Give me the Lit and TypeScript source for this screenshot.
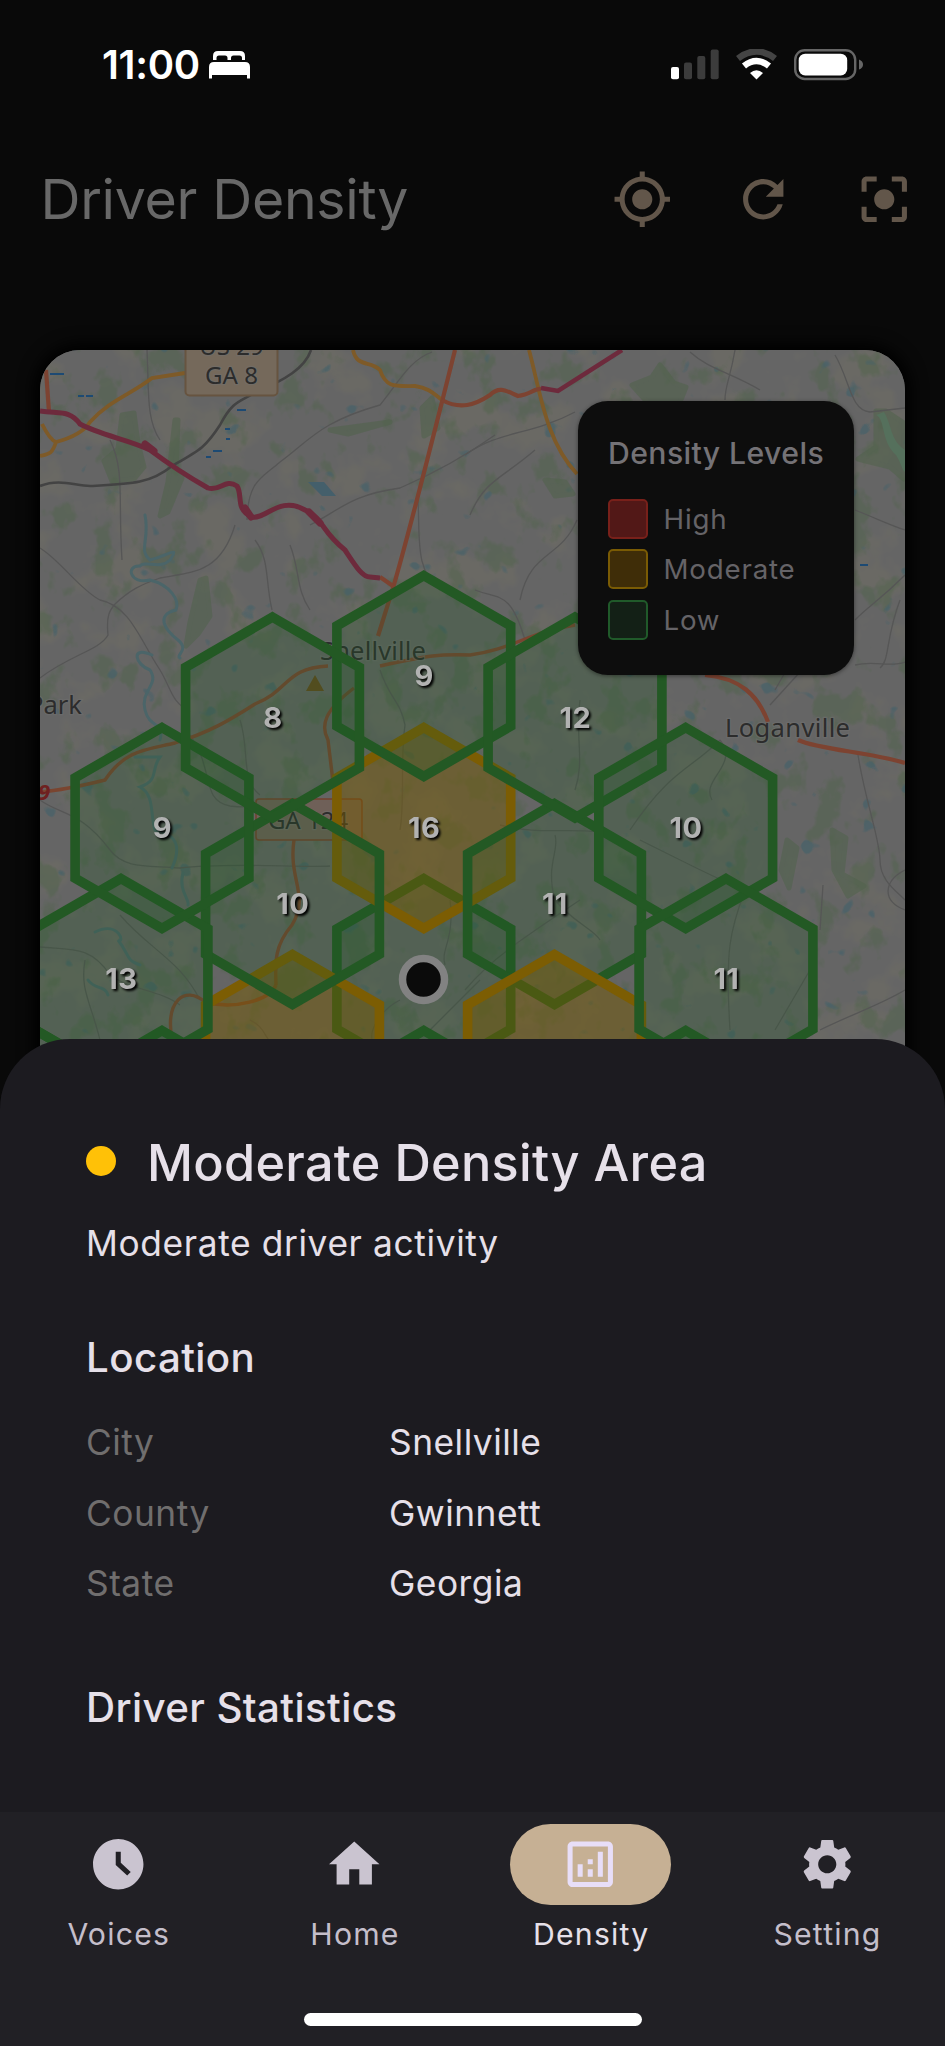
import { LitElement, html, svg, css } from "lit";
import { customElement } from "lit/decorators.js";

type Level = "low" | "mod";
interface Cell { x: number; y: number; level: Level; n?: number }

// Cells in paint order: centre, inner ring, outer ring.
const CELLS: Cell[] = [
  { x: 423.8, y: 979, level: "low" },
  { x: 423.8, y: 828, level: "mod", n: 16 },
  { x: 554.5, y: 904, level: "low", n: 11 },
  { x: 554.5, y: 1055, level: "mod" },
  { x: 423.8, y: 1131, level: "low" },
  { x: 292.5, y: 1055, level: "mod" },
  { x: 292.5, y: 904, level: "low", n: 10 },
  { x: 423.8, y: 676, level: "low", n: 9 },
  { x: 575, y: 717.5, level: "low", n: 12 },
  { x: 685.7, y: 828, level: "low", n: 10 },
  { x: 726, y: 979, level: "low", n: 11 },
  { x: 685.7, y: 1131, level: "low" },
  { x: 162, y: 1131, level: "low" },
  { x: 31, y: 1128, level: "low" },
  { x: 121, y: 979, level: "low", n: 13 },
  { x: 162, y: 828, level: "low", n: 9 },
  { x: 272.5, y: 717.5, level: "low", n: 8 },
];

const hexPoints = (cx: number, cy: number, r = 100.4) =>
  [0, 1, 2, 3, 4, 5]
    .map((i) => {
      const a = (Math.PI / 3) * i - Math.PI / 2;
      return `${(cx + r * Math.cos(a)).toFixed(1)},${(cy + r * Math.sin(a)).toFixed(1)}`;
    })
    .join(" ");

const MINOR = [
  "M147 350 C149 390 146 420 160 440", "M40 548 C60 560 80 590 100 600 C130 606 140 640 160 670 C172 690 170 700 190 712",
  "M115 604 C130 590 140 585 160 578 C190 572 220 575 235 525", "M40 678 C70 655 100 650 108 635 C106 615 110 610 115 604",
  "M247 520 C248 480 262 478 280 462 C310 440 320 422 380 405 C400 380 410 360 432 352",
  "M310 525 C340 510 350 495 400 488 C430 475 460 460 495 435", "M418 500 C420 540 415 570 440 590",
  "M255 540 C270 560 265 580 272 610", "M290 545 C300 570 296 590 310 610", "M110 440 C125 470 118 500 122 560",
  "M465 455 C500 430 530 436 575 412", "M470 515 C485 480 500 480 535 450", "M520 600 C530 550 560 560 577 520",
  "M475 590 C500 600 510 590 525 640", "M690 352 C710 370 730 372 760 390", "M735 350 C730 380 725 385 725 400",
  "M835 355 C850 380 850 410 870 412 L905 408", "M855 510 C880 520 890 525 905 530", "M855 665 C875 660 890 668 905 662",
  "M905 575 C880 600 870 605 855 620", "M900 600 C885 640 890 660 880 668", "M770 705 L800 672", "M795 655 L775 690",
  "M858 755 C865 800 880 840 880 860 C880 880 895 890 905 900", "M823 885 L820 930", "M905 870 C885 880 880 900 905 910",
  "M40 800 C60 815 80 810 110 850 C125 870 150 865 180 868 C230 862 300 868 330 866",
  "M40 947 C70 950 90 945 110 975 C130 990 160 990 180 1005", "M120 915 C150 950 180 960 200 1000",
  "M85 960 C80 990 90 1000 100 1040", "M190 735 C215 770 200 800 230 806 C260 810 290 800 310 800",
  "M240 720 C250 750 240 780 260 795", "M380 670 C390 700 400 700 405 725 C400 760 405 800 400 830",
  "M500 825 C540 835 560 828 600 832", "M555 835 C560 850 545 865 555 900 C570 920 595 930 600 940",
  "M580 700 C575 740 585 760 575 790", "M630 830 C670 770 690 770 720 740", "M720 740 C740 765 700 780 712 800",
  "M745 890 C730 930 725 950 730 1030", "M640 840 C700 870 720 880 745 890", "M465 990 C490 960 520 940 580 900",
  "M775 1030 L810 970", "M820 1030 C850 1015 880 1005 905 990", "M430 1030 L480 980", "M450 900 C455 940 440 950 445 965",
  "M250 1020 C270 1030 260 1040 290 1060", "M400 1000 C380 1010 370 1030 372 1039",
];

const STREAMS = [
  "M145 515 C150 540 138 550 150 560 C170 555 180 545 170 560 C160 570 145 560 140 566 C125 565 130 585 150 580 C170 585 180 600 176 610 C155 615 165 630 178 640 C190 650 175 655 180 658",
  "M152 655 C130 645 135 665 150 670 C160 685 140 690 145 710 C150 730 165 720 160 740",
  "M135 757 L160 757 C150 770 160 780 140 787 C155 795 150 815 155 830 C180 835 180 850 172 868",
  "M183 873 C178 890 190 900 188 905", "M95 932 C120 920 125 945 118 940 C130 955 125 960 140 965", "M88 980 C95 990 105 985 108 995",
];

@customElement("density-map")
export class DensityMap extends LitElement {
  static styles = css`
    :host { display: block; width: 865px; height: 760px; border-radius: 40px; overflow: hidden; background: #646464; position: relative; box-shadow: 0 0 16px 6px #000; }
    svg { display: block; }
    .place { font-family: "Noto Sans", sans-serif; fill: #2c2c2c; stroke: #707070; stroke-width: 2.5px; stroke-opacity: 0.5; paint-order: stroke; }
    .low { fill: rgba(36, 88, 37, 0.26); stroke: #235924; }
    .mod { fill: rgba(118, 89, 3, 0.48); stroke: #7c5d03; }
    .hex { stroke-width: 9.6px; stroke-linejoin: miter; }
    .num { font: 700 29px Inter, sans-serif; text-anchor: middle; letter-spacing: 0.4px; fill: #b2b2b2; filter: drop-shadow(2.4px 2.4px 0.8px #000); }
    .legend { position: absolute; left: 538px; top: 51px; width: 276px; height: 274px; box-sizing: border-box; padding: 30px; border-radius: 30px; background: #0d0d0d; box-shadow: 0 1px 4px rgba(0,0,0,.45); display: flex; flex-direction: column; font-family: Inter, sans-serif; }
    .legend-title { font-size: 30.2px; line-height: 45.4px; color: #747276; font-weight: 500; letter-spacing: 0.4px; white-space: nowrap; margin-bottom: 17.6px; }
    .row { display: flex; align-items: center; gap: 15.5px; height: 50.5px; font-size: 27.7px; font-weight: 400; color: #656367; letter-spacing: 0.8px; }
    .swatch { box-sizing: border-box; width: 40px; height: 40px; border-radius: 5px; border: 2.6px solid; }
    .high { background: #521817; border-color: #78201a; }
    .moderate { background: #3f2d08; border-color: #7a5b04; }
    .lowbox { background: #132016; border-color: #205a2a; }
  `;

  render() {
    return html`
      <svg width="865" height="760" viewBox="40 350 865 760">
        <defs>
          <filter id="veg" x="0" y="0" width="100%" height="100%" color-interpolation-filters="sRGB">
            <feTurbulence type="fractalNoise" baseFrequency="0.032 0.026" numOctaves="4" seed="12" />
            <feColorMatrix values="0 0 0 0 .31  0 0 0 0 .39  0 0 0 0 .29  0 8 0 0 -4.5" />
            <feComponentTransfer><feFuncA type="linear" slope="0.5" /></feComponentTransfer>
          </filter>
          <filter id="town" x="0" y="0" width="100%" height="100%" color-interpolation-filters="sRGB">
            <feTurbulence type="fractalNoise" baseFrequency="0.02" numOctaves="4" seed="5" />
            <feColorMatrix values="0 0 0 0 .44  0 0 0 0 .43  0 0 0 0 .39  5 0 0 0 -2.6" />
            <feComponentTransfer><feFuncA type="linear" slope="0.5" /></feComponentTransfer>
          </filter>
          <filter id="ponds" x="0" y="0" width="100%" height="100%" color-interpolation-filters="sRGB">
            <feTurbulence type="fractalNoise" baseFrequency="0.05" numOctaves="2" seed="31" />
            <feColorMatrix values="0 0 0 0 .27  0 0 0 0 .38  0 0 0 0 .41  0 0 14 0 -10.2" />
            <feComponentTransfer><feFuncA type="linear" slope="0.7" /></feComponentTransfer>
          </filter>
        </defs>
        <rect x="40" y="350" width="865" height="760" fill="#656565" />
        <rect x="40" y="350" width="865" height="760" filter="url(#town)" />
        <rect x="40" y="350" width="865" height="760" filter="url(#veg)" />
        <rect x="40" y="350" width="865" height="760" filter="url(#ponds)" />
        <g fill="#52634e" opacity=".6" stroke="#52634e" stroke-width="5" stroke-linejoin="round">
          <path d="M122 415 l12 -2 4 30 6 24 -10 12 -22 2 -8 -20 14 -12z" />
          <path d="M175 420 l3 0 -2 48 6 10 -14 34 -8 4 8 -34z" />
          <path d="M200 580 l6 -2 4 38 -12 18 -12 12 4 -24z" />
          <path d="M330 430 l60 -8 -42 12z" /><path d="M422 408 l10 -10 6 30 -14 8z" />
          <path d="M632 385 l20 -8 8 -12 14 18 12 4 -8 20 -30 -4z" />
          <path d="M545 480 l20 2 8 12 -18 2z" /><path d="M876 411 l10 0 18 12 0 56 -14 -12 -32 -8 18 -12z" />
          <path d="M832 830 l14 8 -4 36 22 12 -16 10 -14 -26z" /><path d="M787 840 l10 8 -8 40 -8 -18z" />
        </g>
        <path d="M876 415 C886 420 880 440 896 455 C902 465 902 470 905 472 L905 450 C890 440 892 425 884 412z" fill="#55705c" />
        <path d="M308 482 l16 0 12 14 -14 0z" fill="#445f6b" />
        <g fill="none" stroke="#565656" stroke-width="1.3">${MINOR.map((d) => svg`<path d=${d} />`)}</g>
        <g fill="none" stroke="#4b6569" stroke-width="3" stroke-linecap="round">${STREAMS.map((d) => svg`<path d=${d} />`)}</g>
        <g stroke="#1d4a73" stroke-width="2.2">
          <path d="M50 374h14 M78 396h6 M86 396h7 M237 410h9 M225 429h5 M226 439h4 M213 451h9 M206 457h5 M860 565h8" />
        </g>
        <path d="M40 486 C60 478 75 486 90 486 C130 484 150 484 172 466 C200 450 205 448 220 425 C233 400 240 402 256 392 C285 380 305 368 311 350" fill="none" stroke="#434343" stroke-width="2.6" />
        <g fill="none" stroke="#7e5a28" stroke-width="3.8">
          <path d="M42 424 C45 430 50 440 56 442 C52 455 48 454 40 456 M56 442 C75 437 85 430 90 422 C110 400 130 395 152 378 L185 373" />
          <path d="M353 350 C357 368 370 360 380 370 C386 388 395 386 415 386 C430 388 435 395 442 400" />
          <path d="M529 350 C540 390 545 440 577 474" />
        </g>
        <g fill="none" stroke="#7d4331" stroke-width="4.2">
          <path d="M46 370 L49 412" /><path d="M455 350 C440 410 410 530 393 588 L378 636" />
          <path d="M442 400 C460 410 475 405 490 395 C500 385 508 392 518 396 C530 395 535 388 541 389" />
          <path d="M380 577 L393 586" />
          <path d="M705 675 C740 678 758 695 768 722 M798 740 C820 750 870 752 905 763" />
        </g>
        <g fill="none" stroke="#7a4530" stroke-width="3.4">
          <path d="M40 792 C65 790 85 785 105 780 C125 750 145 750 175 743 C210 732 230 720 255 704 C290 690 285 668 328 666" />
          <path d="M380 666 C430 655 440 654 470 655 C510 650 530 632 575 625" />
          <path d="M354 688 C325 710 320 725 328 740 L334 790 M294 840 C288 880 310 895 292 925 C275 945 275 960 276 985" />
          <path d="M172 1040 C165 1000 185 985 205 1002 C235 1010 270 1000 276 985" />
        </g>
        <path d="M40 411 C60 414 70 410 80 424 C100 435 130 440 150 450 C170 465 185 475 208 488 C220 492 225 478 237 486 C243 495 235 510 252 517 C265 520 280 495 305 510 C325 520 320 530 345 550 C355 565 362 577 370 577 L380 578" fill="none" stroke="#6d2a3c" stroke-width="5" />
        <path d="M145 444 l9 7 M309 512 l11 11 M245 508 l6 9" stroke="#6d2a3c" stroke-width="7" stroke-linecap="round" />
        <path d="M541 388 L558 391 L622 350" fill="none" stroke="#6d2a3c" stroke-width="4.5" />

        <rect x="185.500" y="330" width="92" height="65.500" rx="4" fill="#75695b" stroke="#675440" stroke-width="2" />
        <text class="place" x="231.500" y="354.500" font-size="24" text-anchor="middle">US 29</text>
        <text class="place" x="231.500" y="384" font-size="24" text-anchor="middle">GA 8</text>
        <rect x="256" y="799" width="106" height="41" rx="3" fill="#6f6058" stroke="#74402c" stroke-width="1.500" />
        <text class="place" x="308" y="829" font-size="24" text-anchor="middle">GA 124</text>
        <text class="place" x="320" y="660" font-size="25.500" textLength="106">Snellville</text>
        <text class="place" x="725" y="736.500" font-size="25.500" textLength="125">Loganville</text>
        <text class="place" x="28" y="714" font-size="25.500">Park</text>
        <text x="38" y="800" font-family="Noto Sans, sans-serif" font-weight="700" font-style="italic" font-size="22" fill="#6e2020">9</text>
        <path d="M315 675 l9 16 h-18z" fill="#63491d" />

        ${CELLS.map((c) => svg`<polygon class="hex ${c.level}" points=${hexPoints(c.x, c.y)} />`)}
        ${CELLS.filter((c) => c.n !== undefined).map(
          (c) => svg`<text class="num" x=${c.x + 0.3} y=${c.y + 10.2}>${c.n}</text>`
        )}
        <circle cx="423.500" cy="979.500" r="21" fill="#0b0b0b" stroke="#828282" stroke-width="7.500" />
      </svg>
      <div class="legend">
        <div class="legend-title">Density Levels</div>
        <div class="row"><span class="swatch high"></span>High</div>
        <div class="row"><span class="swatch moderate"></span>Moderate</div>
        <div class="row"><span class="swatch lowbox"></span>Low</div>
      </div>
    `;
  }
}

const NAV_ICONS = {
  clock: svg`<path d="M12 2C6.500 2 2 6.500 2 12s4.500 10 10 10 10-4.500 10-10S17.500 2 12 2zm3.550 14.500L11 12.300V7h2v4.400l3.950 3.700z" />`,
  home: svg`<path d="M10 20v-6h4v6h5v-8h3L12 3 2 12h3v8z" />`,
  chart: svg`<path d="M19 3H5c-1.100 0-2 .9-2 2v14c0 1.100.9 2 2 2h14c1.100 0 2-.9 2-2V5c0-1.100-.9-2-2-2zm0 16H5V5h14v14zM7 12h2v5H7zm8-5h2v10h-2zm-4 7h2v3h-2zm0-4h2v2h-2z" />`,
  gear: svg`<path d="M19.140 12.940c.04-.3.060-.610.060-.940 0-.320-.020-.640-.070-.940l2.030-1.580c.180-.140.230-.410.120-.610l-1.920-3.320c-.120-.220-.370-.290-.590-.220l-2.390.960c-.5-.380-1.030-.7-1.620-.940l-.360-2.540c-.040-.240-.240-.410-.480-.410h-3.840c-.240 0-.430.170-.470.410l-.360 2.540c-.590.240-1.130.570-1.620.940l-2.390-.960c-.220-.080-.470 0-.590.220L2.740 8.870c-.120.210-.080.470.120.610l2.030 1.580c-.050.3-.090.630-.090.940s.020.640.070.940l-2.030 1.580c-.180.140-.230.410-.120.610l1.920 3.320c.120.220.370.290.590.220l2.390-.960c.5.380 1.030.7 1.620.940l.360 2.540c.050.240.240.410.480.410h3.840c.240 0 .440-.170.470-.410l.360-2.540c.590-.240 1.130-.560 1.620-.940l2.390.960c.220.080.470 0 .590-.220l1.920-3.320c.120-.220.070-.470-.120-.610l-2.010-1.580zM12 15.600c-1.980 0-3.600-1.620-3.600-3.600s1.620-3.600 3.600-3.600 3.600 1.620 3.600 3.600-1.620 3.600-3.600 3.600z" />`,
};

@customElement("app-root")
export class AppRoot extends LitElement {
  static styles = css`
    :host { display: flex; flex-direction: column; width: 945px; height: 2046px; overflow: hidden; background: #1c1b20; font-family: Inter, sans-serif; }
    .page { height: 1109px; flex: none; overflow: hidden; background: #090909; display: flex; flex-direction: column; }
    .status { height: 129px; flex: none; box-sizing: border-box; display: flex; align-items: center; justify-content: space-between; padding: 0 82px 0 102px; color: #fff; }
    .status-left { display: flex; align-items: center; gap: 9px; }
    .time { font-size: 40px; font-weight: 600; letter-spacing: -0.3px; }
    svg { display: block; }
    .header { height: 121px; margin-top: 9.5px; display: flex; align-items: center; padding-left: 40.5px; flex: none; }
    h1 { margin: 0; flex: 1; font-size: 55.400px; font-weight: 400; color: #686868; line-height: 70px; letter-spacing: -0.3px; }
    .action { width: 121px; height: 121px; display: grid; place-items: center; fill: #62564a; }
    .actions { display: flex; margin-right: 0.5px; }
    density-map { margin: 90.5px 0 0 40px; flex: none; }
    .sheet { position: relative; height: 773px; margin-top: -70px; flex: none; box-sizing: border-box; background: #1c1b20; border-radius: 70px 70px 0 0; padding: 94.400px 86px 0; color: #e6e0e9; }
    .heading { display: flex; align-items: center; gap: 31px; height: 60px; }
    .dot { width: 30px; height: 30px; border-radius: 50%; background: #ffc107; margin-bottom: 5px; }
    h2 { margin: 0; font-size: 50.400px; font-weight: 500; line-height: 60px; white-space: nowrap; letter-spacing: 0.3px; }
    p { margin: 25.800px 0 0; font-size: 35.300px; line-height: 50px; font-weight: 400; letter-spacing: 0.63px; }
    h3 { margin: 58.800px 0 0; font-size: 40.300px; font-weight: 500; line-height: 60px; letter-spacing: 0.38px; }
    .stats { margin-top: 59.300px; }
    dl { margin: 19.400px 0 0; display: grid; grid-template-columns: 303px 1fr; grid-auto-rows: 70.500px; align-items: center; font-size: 35.300px; font-weight: 400; letter-spacing: 0.5px; }
    dt { color: #706e6e; }
    dd { margin: 0; }
    nav { height: 234px; flex: none; box-sizing: border-box; background: #212025; display: grid; grid-template-columns: repeat(4, 1fr); grid-template-rows: 130px 1fr; padding-top: 12px; justify-items: center; }
    .tab { display: flex; flex-direction: column; align-items: center; gap: 9px; }
    .pill { width: 161px; height: 81px; border-radius: 41px; display: grid; place-items: center; fill: #cac4d0; }
    .label { font-size: 30.200px; line-height: 40px; font-weight: 400; letter-spacing: 1.2px; margin-right: -1.2px; color: #c4beca; }
    .on .pill { background: #c6b094; fill: #e8def8; }
    .on .label { color: #e6e0e9; }
    .bar { grid-column: 1 / -1; width: 338px; height: 13px; border-radius: 7px; background: #fff; margin-top: 59px; }
  `;

  private tab(icon: unknown, label: string, on = false) {
    return html`<div class="tab ${on ? "on" : ""}">
      <span class="pill"><svg width="60.500" height="60.500" viewBox="0 0 24 24">${icon}</svg></span>
      <span class="label">${label}</span>
    </div>`;
  }

  render() {
    return html`
      <div class="page">
        <div class="status">
          <div class="status-left">
            <span class="time">11:00</span>
            <svg width="41" height="28" viewBox="0 0 41 28" fill="#fff">
              <path d="M4 9V5Q4 0 9 0h22q5 0 5 5v4h-3V7q0-2.500-2.500-2.500h-6Q22 4.500 22 7v2h-3.500V7q0-2.500-2.500-2.500h-6Q7.500 4.500 7.500 7v2z" />
              <path d="M0 27.500V16q0-5 5-5h31q5 0 5 5v11.500h-3V24H3v3.500z" />
            </svg>
          </div>
          <svg width="192" height="32" viewBox="671 48 192 32">
            <rect x="671" y="66" width="8" height="12.300" rx="2" fill="#fff" />
            <g fill="#3c3c3c">
              <rect x="684" y="61.500" width="8" height="16.800" rx="2" />
              <rect x="697.300" y="55" width="8" height="23.300" rx="2" />
              <rect x="710.700" y="48.500" width="8" height="29.800" rx="2" />
            </g>
            <g fill="none">
              <path d="M738 57.500 Q756.500 43.500 775 57.500" stroke="#444" stroke-width="6.500" />
              <path d="M744 65 Q756.500 55 769 65" stroke="#fff" stroke-width="6.500" />
            </g>
            <path d="M750 72 Q756.500 66.500 763 72 L756.500 78.500z" fill="#fff" />
            <rect x="795.200" y="49.200" width="60" height="28.800" rx="9.500" fill="none" stroke="#666" stroke-width="2.400" />
            <rect x="798.700" y="52.700" width="48.500" height="21.800" rx="6.500" fill="#fff" />
            <path d="M859 58.500 Q863 60 863 63.500 Q863 67 859 68.500z" fill="#666" />
          </svg>
        </div>
        <div class="header">
          <h1>Driver Density</h1>
          <div class="actions">
            <span class="action"><svg width="60.500" height="60.500" viewBox="0 0 24 24"><path d="M12 8c-2.210 0-4 1.790-4 4s1.790 4 4 4 4-1.790 4-4-1.790-4-4-4zm8.940 3c-.460-4.170-3.770-7.480-7.940-7.940V1h-2v2.060C6.830 3.520 3.520 6.830 3.060 11H1v2h2.060c.460 4.170 3.770 7.480 7.940 7.940V23h2v-2.060c4.170-.460 7.480-3.770 7.940-7.940H23v-2h-2.060zM12 19c-3.870 0-7-3.130-7-7s3.130-7 7-7 7 3.130 7 7-3.130 7-7 7z" /></svg></span>
            <span class="action"><svg width="60.500" height="60.500" viewBox="0 0 24 24"><path d="M17.650 6.350C16.200 4.900 14.210 4 12 4c-4.420 0-7.990 3.580-7.990 8s3.570 8 7.990 8c3.730 0 6.840-2.550 7.730-6h-2.080c-.820 2.330-3.040 4-5.650 4-3.310 0-6-2.690-6-6s2.690-6 6-6c1.660 0 3.140.690 4.220 1.780L13 11h7V4l-2.350 2.350z" /></svg></span>
            <span class="action"><svg width="60.500" height="60.500" viewBox="0 0 24 24"><path d="M12 8c-2.210 0-4 1.790-4 4s1.790 4 4 4 4-1.790 4-4-1.790-4-4-4zm-7 7H3v4c0 1.100.9 2 2 2h4v-2H5v-4zM5 5h4V3H5c-1.100 0-2 .9-2 2v4h2V5zm14-2h-4v2h4v4h2V5c0-1.100-.9-2-2-2zm0 16h-4v2h4c1.100 0 2-.9 2-2v-4h-2v4z" /></svg></span>
          </div>
        </div>
        <density-map></density-map>
      </div>
      <section class="sheet">
        <div class="heading"><span class="dot"></span><h2>Moderate Density Area</h2></div>
        <p>Moderate driver activity</p>
        <h3>Location</h3>
        <dl>
          <dt>City</dt><dd>Snellville</dd>
          <dt>County</dt><dd>Gwinnett</dd>
          <dt>State</dt><dd>Georgia</dd>
        </dl>
        <h3 class="stats">Driver Statistics</h3>
      </section>
      <nav>
        ${this.tab(NAV_ICONS.clock, "Voices")}
        ${this.tab(NAV_ICONS.home, "Home")}
        ${this.tab(NAV_ICONS.chart, "Density", true)}
        ${this.tab(NAV_ICONS.gear, "Setting")}
        <div class="bar"></div>
      </nav>
    `;
  }
}
